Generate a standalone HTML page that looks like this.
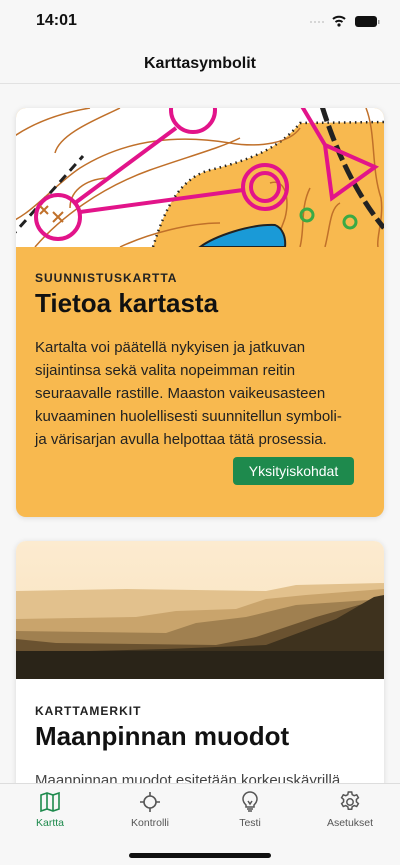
<!DOCTYPE html>
<html><head><meta charset="utf-8"><style>
*{margin:0;padding:0;box-sizing:border-box}
body{width:400px;height:865px;overflow:hidden;background:#f7f7f7;font-family:"Liberation Sans",sans-serif;position:relative}
.status{position:absolute;top:0;left:0;width:400px;height:44px}
.time{position:absolute;left:36px;top:12px;font-size:16px;font-weight:bold;color:#111}
.nav{position:absolute;top:44px;left:0;width:400px;height:40px;text-align:center;font-size:16px;font-weight:bold;color:#111;line-height:40px;border-bottom:1px solid #e2e2e2}
.card{position:absolute;left:16px;width:368px;border-radius:10px;overflow:hidden;box-shadow:0 1px 6px rgba(0,0,0,.12)}
.c1{top:108px;height:409px;background:#F8B94F}
.lab{position:absolute;left:19px;font-size:12px;font-weight:bold;letter-spacing:1px;color:#222}
.ttl{position:absolute;left:19px;font-size:26px;font-weight:bold;color:#111}
.body{position:absolute;left:19px;width:345px;font-size:15px;line-height:23px;color:#222;white-space:nowrap}
.btn{position:absolute;left:217px;top:349px;width:121px;height:28px;background:#1E8A4D;color:#fff;border-radius:4px;font-size:14px;text-align:center;line-height:28px}
.c2{top:541px;height:300px;background:#fff}
.tab{position:absolute;top:783px;left:0;width:400px;height:82px;background:#f7f7f7;border-top:1px solid #ddd}
.ti{position:absolute;top:6px;width:80px;text-align:center;font-size:10.5px;color:#555}
.ti svg{display:block;margin:0 auto 3px}
</style></head><body>
<div class="status"><div class="time">14:01</div>
<svg style="position:absolute;left:309px;top:14px" width="72" height="14"><g fill="#ccc"><circle cx="2" cy="8" r="1"/><circle cx="6" cy="8" r="1"/><circle cx="10" cy="8" r="1"/><circle cx="14" cy="8" r="1"/></g><path d="M24 5a9 9 0 0 1 12 0M26.5 8a5.5 5.5 0 0 1 7 0" stroke="#111" stroke-width="2" fill="none"/><circle cx="30" cy="11" r="1.6" fill="#111"/><rect x="46" y="2" width="22" height="11" rx="3" fill="#111"/><rect x="69" y="6" width="1.5" height="4" fill="#999"/></svg>
</div>
<div class="nav">Karttasymbolit</div>

<div class="card c1">
<svg width="368" height="139" style="position:absolute;top:0;left:0;background:#fff">
<g transform="translate(-16,0)">
<path d="M153 139 C165 100 180 70 210 62 C250 52 280 40 300 15 L384 14 L384 139Z" fill="#F8B94F"/>
<path d="M153 139 C165 100 180 70 210 62 C250 52 280 40 300 15 L384 14" stroke="#222" stroke-width="2.5" stroke-dasharray="1.5 4" fill="none"/>
<g stroke="#C0702A" stroke-width="1.5" fill="none">
<path d="M0 118 C30 110 50 80 80 60 C120 35 170 25 230 35 C260 40 290 35 300 20"/>
<path d="M35 139 C60 110 100 80 150 62 C190 48 220 40 240 30"/>
<path d="M5 35 C30 15 60 5 90 0"/>
<path d="M55 45 C60 25 100 10 120 0"/>
<path d="M70 100 C70 80 90 70 110 70"/>
<path d="M120 139 C150 125 190 115 220 115"/>
<path d="M270 75 C285 70 290 90 285 110 C280 125 275 132 278 139"/>
<path d="M366 0 C376 25 371 60 381 90 C384 110 376 130 378 139"/>
<path d="M300 139 C305 120 300 100 310 80"/>
<path d="M325 139 C330 120 330 100 340 95"/>
</g>
<path d="M10 130 L83 48" stroke="#222" stroke-width="3" stroke-dasharray="9 6" fill="none"/>
<path d="M322 -2 C335 40 355 85 384 120" stroke="#222" stroke-width="5" stroke-dasharray="16 5" fill="none"/>
<path d="M200 139 C215 128 250 116 275 117 C283 120 286 130 285 139Z" fill="#1A9AD7" stroke="#222" stroke-width="2"/>
<g stroke="#E2148A" stroke-width="4" fill="none">
<circle cx="58" cy="109" r="22"/><circle cx="193" cy="2" r="22"/>
<circle cx="265" cy="79" r="22"/><circle cx="265" cy="79" r="14"/>
<path d="M75 95 L176 20 M80 104 L243 82"/>
<path d="M325 37 L375 59 L332 90Z M325 37 L300 -5"/>
</g>
<g stroke="#C0702A" stroke-width="2"><path d="M53 104l10 10M63 104l-10 10M40 98l8 8M48 98l-8 8"/></g>
<g stroke="#3AAA45" stroke-width="3" fill="none"><circle cx="307" cy="107" r="6"/><circle cx="350" cy="114" r="6"/></g>
</g>
</svg>
<div class="lab" style="top:163px">SUUNNISTUSKARTTA</div>
<div class="ttl" style="top:180px">Tietoa kartasta</div>
<div class="body" style="top:228px">Kartalta voi päätellä nykyisen ja jatkuvan<br>sijaintinsa sekä valita nopeimman reitin<br>seuraavalle rastille. Maaston vaikeusasteen<br>kuvaaminen huolellisesti suunnitellun symboli-<br>ja värisarjan avulla helpottaa tätä prosessia.</div>
<div class="btn">Yksityiskohdat</div>
</div>

<div class="card c2">
<svg width="368" height="138" style="position:absolute;top:0;left:0">
<defs><linearGradient id="sk" x1="0" y1="0" x2="0" y2="1"><stop offset="0" stop-color="#FCEBD0"/><stop offset="1" stop-color="#F8E2BC"/></linearGradient></defs>
<rect width="368" height="138" fill="url(#sk)"/>
<path d="M0 50 L110 48 L250 50 L280 44 L368 42 L368 138 L0 138Z" fill="#E2C18D"/>
<path d="M0 78 L120 76 L160 70 L220 68 L250 58 L290 54 L368 48 L368 138 L0 138Z" fill="#C9A46C"/>
<path d="M0 90 L150 92 L180 82 L230 76 L280 64 L368 58 L368 138 L0 138Z" fill="#A08050"/>
<path d="M0 98 L40 102 L200 104 L240 96 L300 76 L350 62 L368 56 L368 138 L0 138Z" fill="#6A5230"/>
<path d="M0 112 L150 108 L250 104 L320 78 L358 56 L368 54 L368 138 L0 138Z" fill="#3E321E"/>
<rect y="110" width="368" height="28" fill="#2A2418"/>
</svg>
<div class="lab" style="top:163px">KARTTAMERKIT</div>
<div class="ttl" style="top:180px">Maanpinnan muodot</div>
<div class="body" style="top:228px;color:#444">Maanpinnan muodot esitetään korkeuskäyrillä.</div>
</div>

<div class="tab">
<div class="ti" style="left:10px;color:#1E8A4D"><svg width="24" height="24" viewBox="0 0 24 24" fill="none" stroke="#1E8A4D" stroke-width="1.6"><path d="M3 5l6-2 6 2 6-2v16l-6 2-6-2-6 2z M9 3v16 M15 5v16"/></svg>Kartta</div>
<div class="ti" style="left:110px"><svg width="24" height="24" viewBox="0 0 24 24" fill="none" stroke="#555" stroke-width="1.6"><circle cx="12" cy="12" r="6"/><path d="M12 2v4M12 18v4M2 12h4M18 12h4"/></svg>Kontrolli</div>
<div class="ti" style="left:210px"><svg width="24" height="24" viewBox="0 0 24 24" fill="none" stroke="#555" stroke-width="1.5"><path d="M8 15c-2-2-3-3.5-3-6a7 7 0 0 1 14 0c0 2.5-1 4-3 6v2H8z M9 19h6M10 21h4 M10 11l2 3 2-3"/></svg>Testi</div>
<div class="ti" style="left:310px"><svg width="24" height="24" viewBox="0 0 24 24" fill="none" stroke="#555" stroke-width="1.5"><circle cx="12" cy="12" r="3.2"/><path d="M10.3 2h3.4l.5 2.6 2 1.1 2.5-.9 1.7 2.9-2 1.8v2.3l2 1.8-1.7 2.9-2.5-.9-2 1.1-.5 2.6h-3.4l-.5-2.6-2-1.1-2.5.9-1.7-2.9 2-1.8V9.5l-2-1.8 1.7-2.9 2.5.9 2-1.1z"/></svg>Asetukset</div>
<div style="position:absolute;left:129px;top:69px;width:142px;height:5px;border-radius:3px;background:#111"></div>
</div>
</body></html>
